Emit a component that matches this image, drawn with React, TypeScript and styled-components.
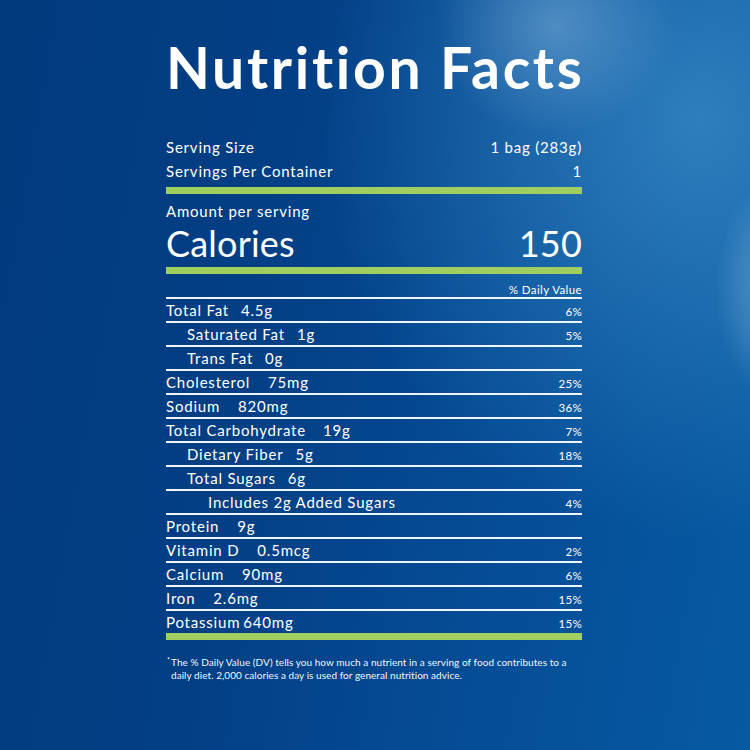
import React from 'react';
import styled, { createGlobalStyle } from 'styled-components';

const GlobalStyle = createGlobalStyle`
    html, body {
        margin: 0;
        padding: 0;
    }
    body {
        width: 750px;
        height: 750px;
        overflow: hidden;
        font-family: Lato, "Open Sans", sans-serif;
        color: #fff;
    }
`;

const colors = {
    green: '#a0cf5f',
    line: '#eef4fa',
};

type Nutrient = {
    name: string;
    amount: string;
    dv?: string;
    indent?: 0 | 1 | 2;
    gap?: number;
};

const nutrients: Nutrient[] = [
    { name: 'Total Fat', amount: '4.5g', dv: '6%', gap: 12 },
    { name: 'Saturated Fat', amount: '1g', dv: '5%', indent: 1, gap: 12 },
    { name: 'Trans Fat', amount: '0g', indent: 1, gap: 12 },
    { name: 'Cholesterol', amount: '75mg', dv: '25%', gap: 18 },
    { name: 'Sodium', amount: '820mg', dv: '36%', gap: 18 },
    { name: 'Total Carbohydrate', amount: '19g', dv: '7%', gap: 17 },
    { name: 'Dietary Fiber', amount: '5g', dv: '18%', indent: 1, gap: 12 },
    { name: 'Total Sugars', amount: '6g', indent: 1, gap: 12 },
    { name: 'Includes 2g Added Sugars', amount: '', dv: '4%', indent: 2 },
    { name: 'Protein', amount: '9g', gap: 18 },
    { name: 'Vitamin D', amount: '0.5mcg', dv: '2%', gap: 18 },
    { name: 'Calcium', amount: '90mg', dv: '6%', gap: 18 },
    { name: 'Iron', amount: '2.6mg', dv: '15%', gap: 18 },
    { name: 'Potassium', amount: '640mg', dv: '15%', gap: 3 },
];

const Page = styled.div`
    width: 750px;
    height: 750px;
    box-sizing: border-box;
    padding-top: 32px;
    display: flex;
    justify-content: center;
    background:
        radial-gradient(ellipse 120px 110px at 555px 25px, rgba(120, 172, 214, 0.55), rgba(120, 172, 214, 0) 100%),
        radial-gradient(ellipse 60px 110px at 775px 290px, rgba(150, 196, 228, 0.5), rgba(150, 196, 228, 0) 100%),
        radial-gradient(ellipse 380px 420px at 700px 120px, rgba(60, 140, 200, 0.75), rgba(60, 140, 200, 0) 100%),
        linear-gradient(100deg, #023a7d 0%, #033f85 35%, #054c95 65%, #065aa2 100%);
`;

const Panel = styled.div`
    width: 416px;
    margin-right: 2px;
    display: flex;
    flex-direction: column;
`;

const Title = styled.h1`
    margin: 0 0 33px;
    font-size: 57px;
    line-height: 70px;
    font-weight: 700;
    letter-spacing: 2.7px;
    text-align: center;
    white-space: nowrap;
`;

const InfoRow = styled.div`
    display: flex;
    justify-content: space-between;
    align-items: center;
    height: 24px;
    font-size: 15px;
    letter-spacing: 0.8px;
`;

const ThickBar = styled.div<{ $gapTop: number }>`
    height: 7px;
    margin-top: ${({ $gapTop }) => $gapTop}px;
    background: ${colors.green};
`;

const AmountLabel = styled.div`
    margin-top: 7px;
    font-size: 15px;
    line-height: 20px;
    letter-spacing: 0.8px;
`;

const CaloriesRow = styled.div`
    margin-top: 2px;
    display: flex;
    justify-content: space-between;
    align-items: center;
    height: 40px;
    font-size: 36px;
    letter-spacing: 0.2px;
`;

const DailyHeader = styled.div`
    padding-top: 9px;
    font-size: 11.5px;
    line-height: 14px;
    letter-spacing: 0.4px;
    text-align: right;
    border-bottom: 2px solid ${colors.line};
`;

const NutrientRow = styled.div<{ $last?: boolean }>`
    display: flex;
    align-items: center;
    height: 22px;
    border-bottom: ${({ $last }) => ($last ? 'none' : `2px solid ${colors.line}`)};
`;

const NutrientName = styled.span<{ $indent: number }>`
    padding-left: ${({ $indent }) => $indent * 21}px;
    font-size: 15px;
    letter-spacing: 0.8px;
    white-space: nowrap;
`;

const NutrientAmount = styled.span<{ $gap: number }>`
    margin-left: ${({ $gap }) => $gap}px;
    font-size: 15px;
    letter-spacing: 0.8px;
`;

const Percent = styled.span`
    margin-left: auto;
    padding-top: 2px;
    font-size: 11.5px;
    letter-spacing: 0.3px;
`;

const Footnote = styled.p`
    margin: 14px 0 0 1px;
    padding-left: 4px;
    text-indent: -4px;
    font-size: 10px;
    line-height: 13px;
    letter-spacing: 0.05px;
    white-space: nowrap;
    color: #f2f6fb;
`;

const Star = styled.sup`
    font-size: 7px;
    vertical-align: 3px;
    margin-right: 1px;
`;

export default function App() {
    return (
        <>
            <GlobalStyle />
            <Page>
                <Panel>
                    <Title>Nutrition Facts</Title>
                    <InfoRow>
                        <span>Serving Size</span>
                        <span>1 bag (283g)</span>
                    </InfoRow>
                    <InfoRow>
                        <span>Servings Per Container</span>
                        <span>1</span>
                    </InfoRow>
                    <ThickBar $gapTop={4} />
                    <AmountLabel>Amount per serving</AmountLabel>
                    <CaloriesRow>
                        <span>Calories</span>
                        <span>150</span>
                    </CaloriesRow>
                    <ThickBar $gapTop={4} />
                    <DailyHeader>% Daily Value</DailyHeader>
                    {nutrients.map((n, i) => (
                        <NutrientRow key={n.name} $last={i === nutrients.length - 1}>
                            <NutrientName $indent={n.indent ?? 0}>{n.name}</NutrientName>
                            {n.amount && <NutrientAmount $gap={n.gap ?? 12}>{n.amount}</NutrientAmount>}
                            {n.dv && <Percent>{n.dv}</Percent>}
                        </NutrientRow>
                    ))}
                    <ThickBar $gapTop={0} />
                    <Footnote>
                        <Star>*</Star>The % Daily Value (DV) tells you how much a nutrient in a serving of food contributes to a
                        <br />
                        daily diet. 2,000 calories a day is used for general nutrition advice.
                    </Footnote>
                </Panel>
            </Page>
        </>
    );
}
